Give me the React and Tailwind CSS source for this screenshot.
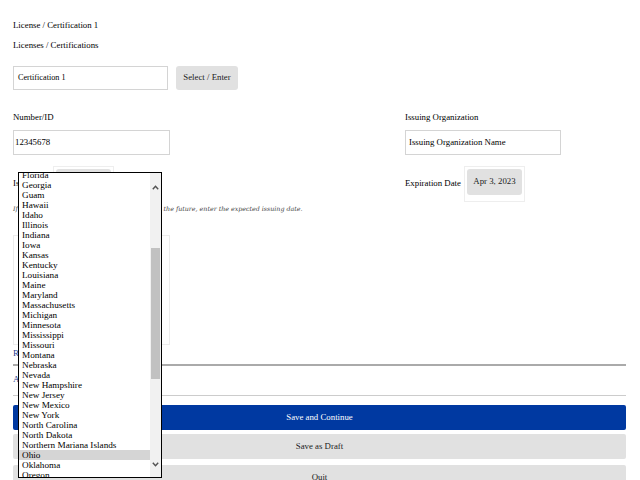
import React from "react";

const states = [
  "Florida",
  "Georgia",
  "Guam",
  "Hawaii",
  "Idaho",
  "Illinois",
  "Indiana",
  "Iowa",
  "Kansas",
  "Kentucky",
  "Louisiana",
  "Maine",
  "Maryland",
  "Massachusetts",
  "Michigan",
  "Minnesota",
  "Mississippi",
  "Missouri",
  "Montana",
  "Nebraska",
  "Nevada",
  "New Hampshire",
  "New Jersey",
  "New Mexico",
  "New York",
  "North Carolina",
  "North Dakota",
  "Northern Mariana Islands",
  "Ohio",
  "Oklahoma",
  "Oregon",
];

const DateBox = ({ value }) => (
  <div className="w-[61px] h-[36px] border border-[#eeeeee] bg-white pt-[2px] pl-[2px]">
    <div className="w-[55px] h-[26px] rounded-[3px] bg-[#e1e1e1] flex items-center justify-center text-[#222]">
      {value}
    </div>
  </div>
);

const StateDropdown = () => (
  <div className="absolute left-[18px] top-[172px] w-[144px] h-[306px] border border-black bg-white flex overflow-hidden">
    <div className="flex-1 overflow-hidden">
      <div className="-mt-[3px]">
        {states.map((s) => (
          <div
            key={s}
            className={
              "h-[10px] leading-[10px] pl-[3px] text-[9.2px] " +
              (s === "Ohio" ? "bg-[#d5d5d5]" : "")
            }
          >
            {s}
          </div>
        ))}
      </div>
    </div>
    {/* scrollbar */}
    <div className="w-[11px] bg-[#f1f1f1] flex flex-col">
      <div className="h-[30px] flex items-start justify-center pt-[12px]">
        <svg width="7" height="5" viewBox="0 0 7 5">
          <path d="M0.8 4.2 L3.5 1.2 L6.2 4.2" fill="none" stroke="#505050" strokeWidth="1.4" />
        </svg>
      </div>
      <div className="h-[45px]" />
      <div className="mx-[1px] h-[131px] bg-[#c1c1c1]" />
      <div className="flex-1 flex items-end justify-center pb-[10px]">
        <svg width="7" height="5" viewBox="0 0 7 5">
          <path d="M0.8 0.8 L3.5 3.8 L6.2 0.8" fill="none" stroke="#505050" strokeWidth="1.4" />
        </svg>
      </div>
    </div>
  </div>
);

export default function App() {
  return (
    <div className="relative w-[640px] h-[480px] overflow-hidden bg-white text-black text-[8.8px] [font-family:'Liberation_Serif',serif]">
      <div className="pl-[13px] pr-[14px] pt-[20px]">
        <div className="leading-[10px]">License / Certification 1</div>
        <div className="mt-[10px] leading-[10px]">Licenses / Certifications</div>

        <div className="mt-[16px] flex gap-[8px]">
          <div className="w-[155px] h-[24px] border border-[#d4d4d4] flex items-center pl-[4px] text-[8.2px]">
            Certification 1
          </div>
          <button className="w-[62px] h-[24px] rounded-[3px] bg-[#e1e1e1] text-[#222]">
            Select / Enter
          </button>
        </div>

        <div className="mt-[22px] flex">
          <div className="w-[392px]">
            <div className="leading-[10px]">Number/ID</div>
            <div className="mt-[8px] w-[157px] h-[25px] border border-[#d4d4d4] flex items-center pl-[1px]">
              12345678
            </div>
          </div>
          <div>
            <div className="leading-[10px]">Issuing Organization</div>
            <div className="mt-[8px] w-[156px] h-[25px] border border-[#d4d4d4] flex items-center pl-[3px]">
              Issuing Organization Name
            </div>
          </div>
        </div>

        <div className="mt-[11px] flex">
          <div className="w-[392px] flex items-start gap-[3px]">
            <div className="mt-[11px]">Issue Date</div>
            <DateBox value="Jan 1, 2023" />
          </div>
          <div className="flex items-start gap-[3px]">
            <div className="mt-[11px]">Expiration Date</div>
            <DateBox value="Apr 3, 2023" />
          </div>
        </div>

        <div className="mt-[2px] italic text-[6.3px] text-[#444] [font-family:'DejaVu_Serif',serif] leading-[10px]">
          If your license or certification will be issued in the future, enter the expected issuing date.
        </div>

        <div className="mt-[21px] w-[157px] h-[110px] border border-[#ececec]" />

        <div className="mt-[3px] leading-[10px] text-[#1f3f8f] text-[9px]">Remove</div>
        <div className="mt-[6px] border-t-2 border-[#aaaaaa]" />
        <div className="mt-[8px] leading-[10px] text-[#1f3f8f] text-[9px]">
          Add Another License / Certification
        </div>
        <div className="mt-[11px] border-t border-[#cccccc]" />

        <div className="mt-[9px] flex flex-col gap-[4px]">
          <button className="h-[25px] w-full rounded-[2px] bg-[#0039a1] text-white">
            Save and Continue
          </button>
          <button className="h-[25px] w-full rounded-[2px] bg-[#e1e1e1] text-[#222]">
            Save as Draft
          </button>
          <button className="mt-[2px] h-[25px] w-full rounded-[2px] bg-[#e1e1e1] text-[#222]">
            Quit
          </button>
        </div>
      </div>

      <StateDropdown />
    </div>
  );
}
